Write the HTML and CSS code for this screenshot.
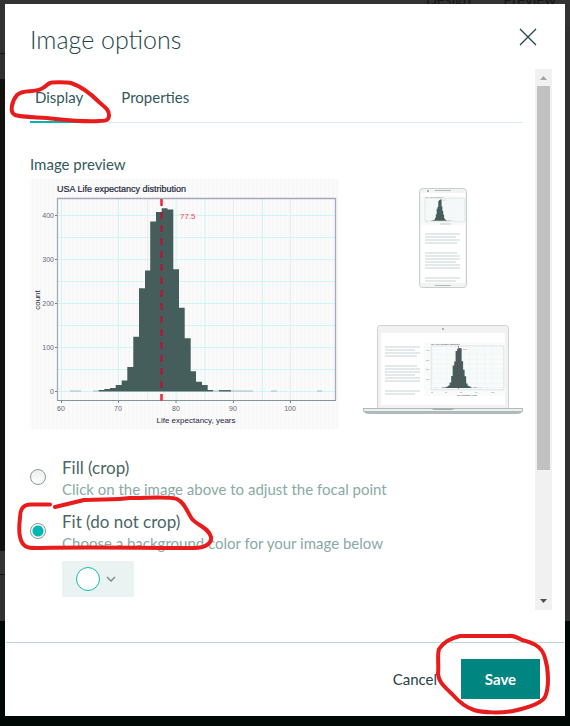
FILE: index.html
```html
<!DOCTYPE html>
<html lang="en">
<head>
<meta charset="utf-8">
<title>Image options</title>
<link rel="stylesheet" href="styles.css">
</head>
<body>
<div class="topbar"><span>Design</span><span>Preview</span></div>
<main class="dialog" role="dialog" aria-labelledby="dialog-title">
  <header class="dialog-header">
    <h1 id="dialog-title">Image options</h1>
    <button class="close" aria-label="Close"><svg width="18" height="18" viewBox="0 0 18 18"><path d="M1 1 17 17M17 1 1 17" stroke="#1d4547" stroke-width="1.2"/></svg></button>
  </header>
  <div class="dialog-body">
    <div class="content">
      <nav class="tabs">
        <button class="tab active">Display</button>
        <button class="tab">Properties</button>
      </nav>
      <h2>Image preview</h2>
      <div class="preview">
        <svg class="chart" viewBox="30 179 309 250" role="img" aria-label="USA Life expectancy distribution">
          <defs>
            <pattern id="stripe" width="4" height="4" patternUnits="userSpaceOnUse"><path d="M1 0V4" stroke="#f4f4f4"/></pattern>
            <g id="grid">
              <path d="M61.5 199V400M118.500 199V400M176 199V400M205 199V400M262.500 199V400M58 215.500H335M58 237.500H335M58 259.500H335M58 281.500H335M58 303.500H335M58 325.500H335M58 347.500H335M58 369.500H335M58 391.500H335" stroke="#cff6f6" fill="none"/>
              <path d="M147.500 199V400M233.500 199V400M290.500 199V400" stroke="#e8ecec" fill="none"/>
            </g>
            <g id="bars">
              <path fill="#455d5b" d="M98.700 391.500V390H104.300V389H110V388H115.700V385H121.700V380.500H127.300V367H133.300V336.700H139V288.300H145V270.500H150.200V221.500H156V212H161.700V208.300H167.500V209.500H173.300V269.300H179V307.700H184.700V338.300H190.700V371.300H196V381.700H202V385H207.700V390H213V391.500Z"/>
              <path fill="#abb9b6" d="M70 390.500H81V391.500H70ZM93 390.500H99V391.500H93ZM213 390.500H253V391.500H213ZM271 390.500H277V391.500H271ZM317 390.500H322V391.500H317Z"/>
              <path fill="#566c69" d="M219 390H231V391.500H219Z"/>
            </g>
          </defs>
          <rect x="30" y="179" width="309" height="250" fill="#fbfbfb"/>
          <rect x="30" y="179" width="309" height="250" fill="url(#stripe)"/>
          <use href="#grid"/>
          <use href="#bars"/>
          <path d="M57.500 400.500V198.500H335.500V400.500" fill="none" stroke="#a6a8bb" stroke-width="1.300"/>
          <path d="M57 400.500H336" stroke="#819696"/>
          <path d="M55 215.500H57M55 259.500H57M55 303.500H57M55 347.500H57M55 391.500H57M61.500 401V403M118.500 401V403M176 401V403M233.500 401V403M290.500 401V403" stroke="#777b88"/>
          <path d="M161.500 199V400" stroke="#bd0f33" stroke-width="2" stroke-dasharray="7 6"/>
          <path d="M161.500 199V205M161.500 394V401" stroke="#ff2638" stroke-width="2"/>
          <text x="57" y="192" class="chart-title">USA Life expectancy distribution</text>
          <text x="180" y="219" class="chart-value">77.5</text>
          <g class="ticks end"><text x="54" y="218">400</text><text x="54" y="262">300</text><text x="54" y="306">200</text><text x="54" y="350">100</text><text x="54" y="394">0</text></g>
          <g class="ticks mid"><text x="61" y="411">60</text><text x="118" y="411">70</text><text x="176" y="411">80</text><text x="233" y="411">90</text><text x="290" y="411">100</text></g>
          <text x="196" y="423" class="axis mid">Life expectancy, years</text>
          <text transform="translate(40 300) rotate(-90)" class="axis mid">count</text>
        </svg>
        <div class="devices">
          <svg class="phone" width="48" height="100" viewBox="0 0 48 100" aria-hidden="true">
            <rect x=".5" y=".5" width="47" height="99" rx="3" fill="#f3f3f3" stroke="#c5cfcd"/>
            <rect x="2" y="5" width="44" height="90" rx="1" fill="#fff"/>
            <path d="M16 2.500H32M16 97.500H32" stroke="#b0bbb8"/><rect x="8" y="2" width="2" height="2" fill="#aab3b1"/>
            <rect x="2" y="8" width="44" height="29" fill="#f8f9f9"/>
            <g transform="translate(-2.200 -12.700) scale(.143 .116)"><use href="#grid"/><use href="#bars"/><path d="M57 199H335V400H57Z" fill="none" stroke="#c9d2d1" stroke-width="3"/><path d="M180 214H208" stroke="#ffc6cf" stroke-width="8"/></g>
            <text x="6" y="10" class="mini">USA Life expectancy</text>
            <path d="M21 36H32" stroke="#c9cccf"/>
            <path d="M6 46H41M6 49H37M6 52H41M6 55H38M6 65H38M6 68H41M6 71H41M6 74H37M6 77H41M6 80H41M6 90H41M6 93H37" stroke="#e2e9e8" stroke-width="2"/>
          </svg>
          <svg class="laptop" width="160" height="90" viewBox="0 0 160 90" aria-hidden="true">
            <path d="M14.500 84V4.500Q14.500 1.500 17.500 1.500H142.500Q145.500 1.500 145.500 4.500V84" fill="#f2f2f2" stroke="#cbd2d0"/>
            <rect x="18" y="9" width="124" height="72" fill="#fff"/><rect x="79" y="4" width="2" height="2" fill="#aab5b2"/>
            <rect x="61" y="18" width="81" height="54" fill="#f9fafa"/>
            <g transform="translate(53.400 -21.400) scale(.261 .218)"><use href="#grid"/><use href="#bars"/><path d="M57 199H335V400H57Z" fill="none" stroke="#c5d0d0" stroke-width="2"/><path d="M161 199V400" stroke="#b3304a" stroke-width="3" stroke-dasharray="10 7"/></g>
            <text x="68" y="21" class="mini dark">USA Life expectancy distribution</text>
            <text x="100" y="26" class="mini value">77.5</text>
            <g class="mini"><text x="63" y="27">400</text><text x="63" y="37">300</text><text x="63" y="46">200</text><text x="63" y="56">100</text><text x="68" y="69">60</text><text x="82" y="69">70</text><text x="97" y="69">80</text><text x="112" y="69">90</text><text x="128" y="69">100</text></g>
            <text x="94" y="72" class="mini dark">Life expectancy, years</text>
            <path d="M22 23H57M22 26H52M22 29H57M22 32H54M22 42H54M22 45H57M22 48H57M22 51H52M22 54H57M22 57H57M22 67H57M22 70H52" stroke="#e2e9e8" stroke-width="2"/>
            <path d="M0 84H160V87Q158 90 154 90H6Q2 90 0 87Z" fill="#b0bab8"/><path d="M1 85H159V87H1Z" fill="#eef0f0"/><path d="M68 84H92Q91 86 88 86H72Q69 86 68 84Z" fill="#a5b1ae"/>
          </svg>
        </div>
      </div>
      <div class="options">
        <div class="option"><input type="radio" name="fit" id="fill"><label for="fill"><span class="option-title">Fill (crop)</span><span class="hint">Click on the image above to adjust the focal point</span></label></div>
        <div class="option"><input type="radio" name="fit" id="contain" checked><label for="contain"><span class="option-title">Fit (do not crop)</span><span class="hint">Choose a background color for your image below</span></label></div>
        <button class="swatch" aria-label="Background color"><span class="color"></span><svg width="10" height="6" viewBox="0 0 10 6"><path d="M1 1 5 5 9 1" fill="none" stroke="#6c8986" stroke-width="1.300"/></svg></button>
      </div>
    </div>
    <div class="scrollbar" aria-hidden="true"><span class="arrow up"></span><span class="thumb"></span><span class="arrow down"></span></div>
  </div>
  <footer><button class="cancel">Cancel</button><button class="save">Save</button></footer>
</main>
<svg class="marks" width="570" height="726" viewBox="0 0 570 726" aria-hidden="true">
  <path d="M50 83C51 82 67 82 71 83C83 87 92 95 99 102C106 108 109 110 109 115C109 120 107 121 99 121C81 122 67 120 47 118C31 117 21 117 15 115C9 112 12 101 17 95C23 89 33 93 41 89C46 87 47 84 50 83"/>
  <path d="M50 504.500H32C23 504 20 509 20 518C18 533 20 540 23 544C26 548 29 548 41 548C88 547 140 548 194 548C207 548 212 542 211 537C209 528 197 525 192 519C186 510 185 503 177 499C169 496 147 498 130 498C115 500 105 499 84 500L55 507"/>
  <path d="M513 636H460C451 638 443 643 439 649C437 655 439 665 438 674C439 683 445 687 452 694C459 702 465 707 474 710C483 713 502 713 513 711C527 708 541 704 545 697C549 688 549 671 545 658C542 645 530 642 522 640C516 637 512 635 508 636"/>
</svg>
</body>
</html>
```
FILE: styles.css
```css
* { box-sizing: border-box; }
body {
  margin: 0;
  min-height: 100vh;
  display: flex;
  flex-direction: column;
  padding: 0 5px 10px;
  color: #34595a;
  font-family: Lato, "Liberation Sans", sans-serif;
  font-size: 15px;
  background:
    linear-gradient(#323232 0 53px, #151515 53px 54px, #303030 54px 79px, #111 79px 551px, #343434 551px 574px, #111 574px 575px, #303030 575px 621px, #000806 621px) left / 5px 100% no-repeat,
    linear-gradient(#323232 0 27px, #2c2c2c 27px 28px, #303030 28px 621px, #000806 621px);
}
.topbar { height: 4px; overflow: hidden; display: flex; justify-content: flex-end; align-items: flex-end; gap: 32px; padding-right: 9px; line-height: 10px; color: #161616; }
.dialog { flex: 1; display: flex; flex-direction: column; background: #fff; }
button { font: inherit; color: inherit; border: 0; background: none; padding: 0; }
h1, h2 { margin: 0; font-weight: 400; }
.dialog-header { display: flex; justify-content: space-between; height: 65px; padding: 19px 28px 0 25px; align-items: flex-start; }
h1 { font-size: 25px; line-height: 32px; font-weight: 300; color: #1f4446; }
.close { display: flex; margin-top: 5px; }
.dialog-body { display: flex; flex: 1; min-height: 0; margin-bottom: 32px; padding-right: 13px; }
.content { flex: 1; padding: 16px 12px 0 25px; }
.tabs { display: flex; gap: 28px; height: 38px; border-bottom: 1px solid #d9ece8; }
.tab { height: 38px; padding: 0 5px 14px; }
.active { border-bottom: 2px solid #00b8b1; padding-bottom: 12px; }
h2 { font-size: 15px; line-height: 20px; margin-top: 31px; }
.preview { display: flex; gap: 24px; margin-top: 5px; }
.chart { flex: 1; min-width: 0; display: block; }
.devices { display: flex; flex-direction: column; align-items: center; justify-content: space-between; padding: 9px 0 15px; }
.chart text, .mini { font-family: "Liberation Sans", sans-serif; }
.chart .chart-title { font-size: 9px; fill: #202636; stroke: #202636; stroke-width: .2px; }
.chart .chart-value { font-size: 8px; fill: #ff3b58; }
.ticks { font-size: 7px; fill: #606878; }
.axis { font-size: 8px; fill: #24283c; }
.end { text-anchor: end; }
.mid { text-anchor: middle; }
.mini { font-size: 2px; fill: #6c777a; }
.mini.dark { fill: #202636; }
.mini.value { fill: #ff2040; }
.options { margin-top: 28px; }
.option { display: flex; gap: 16px; margin-bottom: 12px; }
.option label { display: flex; flex-direction: column; }
.option-title { font-size: 17px; line-height: 22px; color: #4a6665; }
.hint { line-height: 20px; color: #8aaaa6; }
.option input { appearance: none; flex: none; width: 16px; height: 16px; margin: 12px 0 0; border: 1px solid #829b98; border-radius: 50%; background: linear-gradient(#eee, #fff); }
.option input:checked { background: radial-gradient(circle, #00b8b1 0 5px, #fff 6px); }
.swatch { display: flex; align-items: center; gap: 6px; width: 72px; height: 36px; margin: -4px 0 0 32px; padding-left: 14px; background: #ebf2f2; }
.color { width: 24px; height: 24px; border: 1px solid #18b8b2; border-radius: 50%; background: #fff; }
.scrollbar { width: 17px; display: flex; flex-direction: column; align-items: center; background: #f1f1f1; }
.arrow { width: 7px; height: 4px; background: #a3a3a3; clip-path: polygon(50% 0, 100% 100%, 0 100%); }
.up { margin: 7px 0 6px; }
.down { margin: auto 0 7px; background: #505050; clip-path: polygon(0 0, 100% 0, 50% 100%); }
.thumb { width: 13px; flex: 0 0 71%; background: #c1c1c1; }
footer { display: flex; justify-content: flex-end; align-items: center; gap: 24px; height: 74px; margin: 0 1px; padding: 0 24px 1px; border-top: 1px solid #c0d9d8; }
.cancel { color: #1f4446; }
.save { width: 79px; height: 40px; color: #fff; background: #008580; font-weight: 700; }
.marks { position: absolute; top: 0; left: 0; pointer-events: none; fill: none; stroke: #e81c1c; stroke-width: 4; stroke-linecap: round; stroke-linejoin: round; }
```
